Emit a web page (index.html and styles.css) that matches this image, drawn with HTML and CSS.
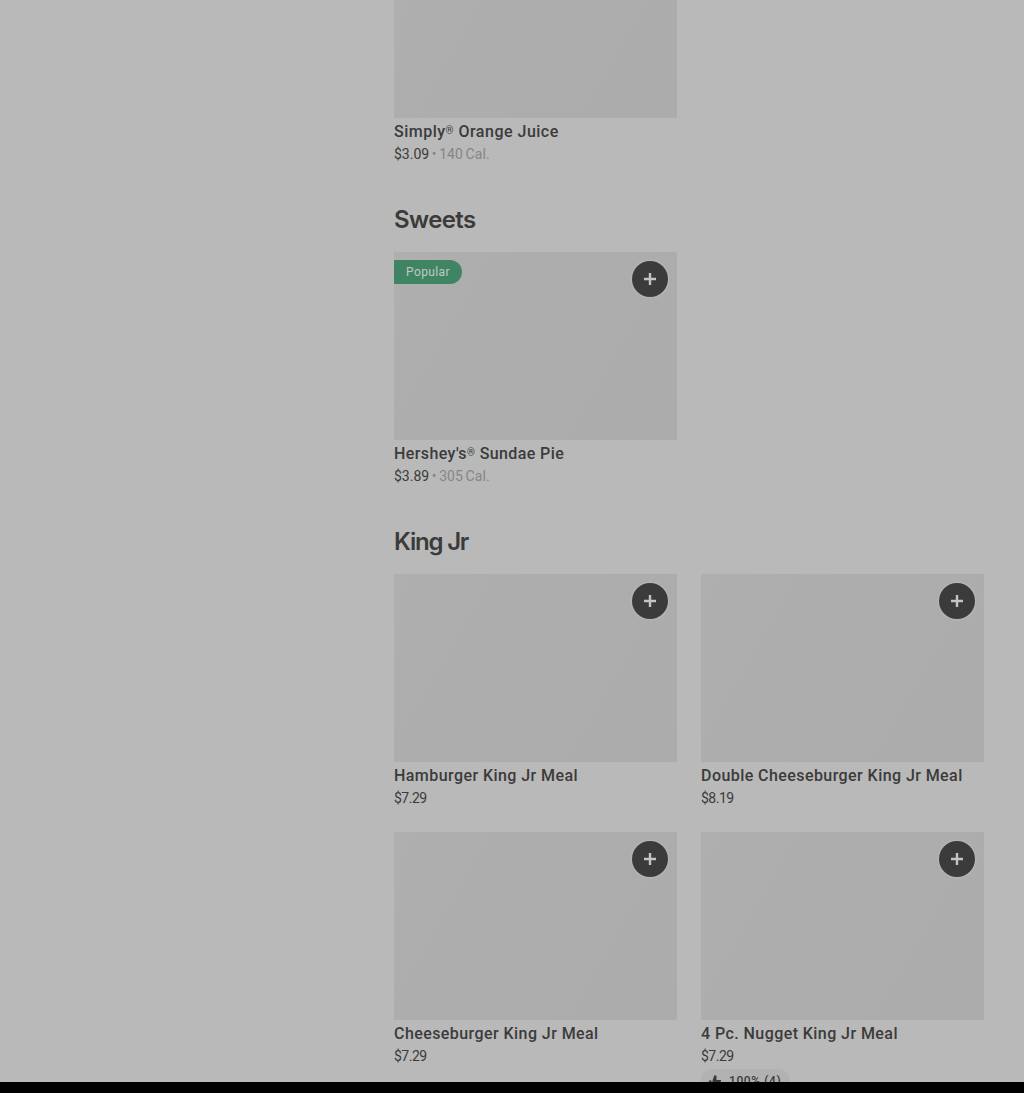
FILE: index.html
```html
<!DOCTYPE html>
<html lang="en">
<head>
<meta charset="utf-8">
<title>Menu</title>
<link rel="stylesheet" href="styles.css">
</head>
<body>
<svg class="symbols" aria-hidden="true"><symbol id="plus" viewBox="0 0 36 36"><path d="M18 12v12M12 18h12" stroke="#c4c4c4" stroke-width="2.4" fill="none"/></symbol></svg>
<main class="menu">
  <section class="section">
    <div class="grid">
      <article class="card">
        <div class="photo photo-cut"></div>
        <h3 class="name juice">Simply<span class="reg">®</span> Orange Juice</h3>
        <p class="price">$3.09<span class="calories"> • 140 Cal.</span></p>
      </article>
    </div>
  </section>
  <section class="section">
    <h2 class="heading sweets">Sweets</h2>
    <div class="grid">
      <article class="card">
        <div class="photo"><span class="tag">Popular</span><button class="add" aria-label="Add"><svg><use href="#plus"/></svg></button></div>
        <h3 class="name pie">Hershey's<span class="reg">®</span> Sundae Pie</h3>
        <p class="price">$3.89<span class="calories"> • 305 Cal.</span></p>
      </article>
    </div>
  </section>
  <section class="section">
    <h2 class="heading king">King Jr</h2>
    <div class="grid">
      <article class="card">
        <div class="photo"><button class="add" aria-label="Add"><svg><use href="#plus"/></svg></button></div>
        <h3 class="name">Hamburger King Jr Meal</h3>
        <p class="price short">$7.29</p>
      </article>
      <article class="card">
        <div class="photo"><button class="add" aria-label="Add"><svg><use href="#plus"/></svg></button></div>
        <h3 class="name">Double Cheeseburger King Jr Meal</h3>
        <p class="price short">$8.19</p>
      </article>
      <article class="card">
        <div class="photo"><button class="add" aria-label="Add"><svg><use href="#plus"/></svg></button></div>
        <h3 class="name">Cheeseburger King Jr Meal</h3>
        <p class="price short">$7.29</p>
      </article>
      <article class="card">
        <div class="photo"><button class="add" aria-label="Add"><svg><use href="#plus"/></svg></button></div>
        <h3 class="name">4 Pc. Nugget King Jr Meal</h3>
        <p class="price short">$7.29</p>
        <div class="rating"><svg class="thumb" viewBox="0 0 12 12"><path d="M0 5.5h2.5V12H0zM3.5 5.5 5.5 0 7.5 1v4H12l-1 7H3.5z" fill="#3a3a3a"/></svg>100% (4)</div>
      </article>
    </div>
  </section>
</main>
<footer class="bar"></footer>
</body>
</html>
```
FILE: styles.css
```css
* { box-sizing: border-box; }
body {
  margin: 0;
  height: 1093px;
  display: flex;
  flex-direction: column;
  overflow: hidden;
  background: #b9b9b9;
  color: #3b3b3b;
  font-family: Roboto, "Liberation Sans", sans-serif;
}
h2, h3, p { margin: 0; white-space: nowrap; }
.symbols { position: absolute; width: 0; height: 0; }
.menu { height: 1082px; flex: none; overflow: hidden; padding-left: 394px; }
.bar { height: 11px; flex: none; background: #000; }
.section { margin-bottom: 38px; }
.grid { display: grid; grid-template-columns: 283px 283px; gap: 24px; }
.photo {
  position: relative;
  height: 188px;
  margin-bottom: 2px;
  background: linear-gradient(120deg, #afafaf 0%, #adadad 35%, #acacac 100%);
}
.photo-cut { height: 118px; }
.name { font-size: 16px; line-height: 24px; font-weight: 500; letter-spacing: .43px; }
.juice { letter-spacing: .5px; }
.pie { letter-spacing: .4px; }
.reg { font-size: 10px; line-height: 0; vertical-align: 3px; }
.price { font-size: 14px; line-height: 20px; }
.short { letter-spacing: -.5px; }
.calories { color: #868686; word-spacing: -1px; letter-spacing: .1px; }
.heading {
  font-family: Inter, "Liberation Sans", sans-serif;
  font-size: 24px;
  line-height: 36px;
  font-weight: 600;
  margin-bottom: 14px;
}
.sweets { letter-spacing: -.6px; }
.king { letter-spacing: -1.2px; }
.tag {
  position: absolute;
  left: 0;
  top: 8px;
  height: 24px;
  padding: 0 12px;
  border-radius: 0 12px 12px 0;
  background: #3f8563;
  color: #c0c9c4;
  font-size: 12px;
  line-height: 24px;
  letter-spacing: .4px;
}
.add {
  position: absolute;
  right: 9px;
  top: 9px;
  width: 36px;
  height: 36px;
  padding: 0;
  border: 0;
  border-radius: 50%;
  background: #3b3b3b;
  box-shadow: 0 0 2px 1px #b9b9b9;
}
.add svg { display: block; width: 36px; height: 36px; }
.rating {
  display: flex;
  align-items: center;
  gap: 8px;
  width: 89px;
  height: 24px;
  margin-top: 3px;
  padding-left: 8px;
  border-radius: 12px;
  background: #b1b1b1;
  font-size: 12px;
  font-weight: 500;
  letter-spacing: .6px;
}
.thumb { width: 12px; height: 12px; }
```
